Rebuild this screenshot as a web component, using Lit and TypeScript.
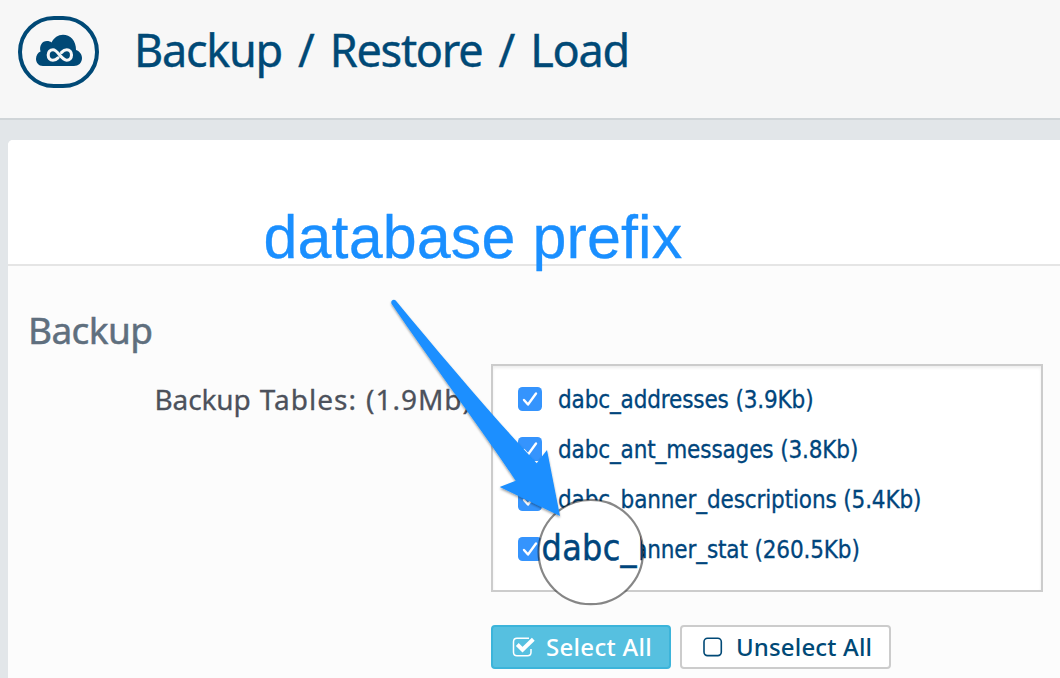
import { LitElement, html, css, svg } from "lit";
import { customElement, state } from "lit/decorators.js";

interface TableRow {
  name: string;
  size: string;
}

@customElement("app-root")
export class AppRoot extends LitElement {
  @state() private rows: TableRow[] = [
    { name: "dabc_addresses", size: "3.9Kb" },
    { name: "dabc_ant_messages", size: "3.8Kb" },
    { name: "dabc_banner_descriptions", size: "5.4Kb" },
    { name: "dabc_banner_stat", size: "260.5Kb" },
  ];

  static styles = css`
    :host { display: block; position: relative; width: 1060px; height: 678px; overflow: hidden;
      background: #e2e6e9; font-family: "Noto Sans", sans-serif; color: #004976; }
    * { box-sizing: border-box; }
    header { display: flex; align-items: flex-start; height: 120px; padding: 16px 0 0 18px;
      background: #f7f7f7; border-bottom: 2px solid #d0d5d8; }
    .logo { width: 81px; height: 72px; flex: none; }
    h1 { margin: 3px 0 0 35px; font-size: 45px; line-height: 62px; font-weight: 400; white-space: pre;
      letter-spacing: -1.3px; word-spacing: 5.9px; -webkit-text-stroke: 0.4px currentColor; }
    .panel { margin: 20px 0 0 8px; height: 538px; background: #fcfcfc; border-radius: 5px 0 0 0; overflow: hidden; }
    .strip { height: 126px; background: #fff; border-bottom: 2px solid #e5e5e5; }
    h2 { margin: 0; padding: 39px 0 0 20px; font-size: 37px; line-height: 50px; height: 98px; font-weight: 400;
      letter-spacing: -0.6px; color: #5f6f7e; -webkit-text-stroke: 0.5px currentColor; }
    .form { display: grid; grid-template-columns: 483px 552px; }
    .label { padding: 15px 19px 0 0; text-align: right; font-size: 28px; line-height: 40px; color: #4c515b;
      white-space: nowrap; letter-spacing: 1px; word-spacing: 0.8px; -webkit-text-stroke: 0.3px currentColor; }
    .label span { letter-spacing: -0.1px; }
    .list { height: 228px; padding: 8px 0 0 25px; background: #fff; border: 2px solid #ccc; box-shadow: inset 0 2px 3px rgba(0,0,0,.07); }
    .row { display: flex; align-items: center; height: 50px; gap: 16px; color: #00457c; }
    .box { width: 24px; height: 24px; flex: none; display: block; }
    .row span { padding-top: 2px; font: 24px/30px "DejaVu Sans Condensed", "DejaVu Sans", sans-serif; font-stretch: condensed;
      white-space: nowrap; letter-spacing: -0.14px; -webkit-text-stroke: 0.3px currentColor; }
    .buttons { grid-column: 2; display: flex; gap: 9px; padding-top: 33px; }
    .btn { display: flex; align-items: center; height: 44px; border-radius: 4px; border: 2px solid #ccc; background: #fff; font-size: 24px; line-height: 40px; font-weight: 500; white-space: nowrap; }
    .primary { width: 180px; padding-left: 18px; gap: 9px; background: #56c0e0; border-color: #3cb4da; color: #fff; letter-spacing: 0.3px; }
    .plain { width: 211px; padding-left: 18px; gap: 10px; letter-spacing: 0.15px; }
    .btn svg { width: 26px; height: 24px; flex: none; }
    .notes { position: absolute; inset: 0; width: 1060px; height: 678px; pointer-events: none; }
    .caption { font: 61px "Liberation Sans", sans-serif; letter-spacing: 0.12px; fill: #1a8fff; stroke: #1a8fff; stroke-width: 0.3px; }
    .lens { font: 35.5px "DejaVu Sans Condensed", "DejaVu Sans", sans-serif; font-stretch: condensed; letter-spacing: 0.35px; fill: #00457c; stroke: #00457c; stroke-width: 0.5px; }
  `;

  private check() {
    return html`<svg class="box" viewBox="0 0 24 24">
      <rect width="24" height="24" rx="4.5" fill="#3594fd"/>
      <path d="M6 13 L10 17.5 L18 6.5" fill="none" stroke="#fff" stroke-width="2.4" stroke-linecap="round" stroke-linejoin="round"/>
    </svg>`;
  }

  render() {
    return html`
      <header>
        <svg class="logo" viewBox="0 0 81 72">
          <rect x="2" y="2" width="77" height="68" rx="34" fill="none" stroke="#004976" stroke-width="4"/>
          <path fill="#004976" d="M25 50 C20.5 50 18 46.5 18 43 C18 39.5 20 36.5 22.5 35.5 C21 30 24 25 29 25 C31 25 32.5 25.5 33.5 26.5 C36 21.5 40 18.7 45 18.7 C52 18.7 58.3 24.5 58 34 C61.8 35.2 64 38.5 64 42 C64 47 60.3 50 56 50 Z"/>
          <path fill="none" stroke="#f7f7f7" stroke-width="3.1" stroke-linecap="round" d="M40 41.8 C38.2 43.6 36.6 44.2 34.9 44.2 C32 44.2 30.2 41.8 30.2 39 C30.2 36 32 33.8 35 33.8 C40 33.8 43.2 44.2 48.7 44.2 C51.7 44.2 53.5 41.8 53.5 39 C53.5 36 51.6 33.8 48.8 33.8 C46.8 33.8 45.3 34.6 43.6 36.4"/>
        </svg>
        <h1>Backup / Restore / Load</h1>
      </header>
      <section class="panel">
        <div class="strip"></div>
        <h2>Backup</h2>
        <div class="form">
          <div class="label"><span>Backup</span> Tables: (1.9Mb)</div>
          <div class="list">
            ${this.rows.map((r) => html`<label class="row">${this.check()}<span>${r.name} (${r.size})</span></label>`)}
          </div>
          <div class="buttons">
            <div class="btn primary">
              <svg viewBox="0 0 26 24" fill="none" stroke="#fff"><path d="M18 3.3 H6 Q2.5 3.3 2.5 6.8 V17.3 Q2.5 20.8 6 20.8 H16.5 Q20 20.8 20 17.3 V14" stroke-width="1.5"/><path d="M6.3 9.5 L11.5 14.6 L22.3 4.2" stroke-width="4"/></svg>
              <span>Select All</span>
            </div>
            <div class="btn plain">
              <svg viewBox="0 0 26 24"><rect x="4" y="3.3" width="17.3" height="17.3" rx="3.5" fill="none" stroke="#004976" stroke-width="1.6"/></svg>
              <span>Unselect All</span>
            </div>
          </div>
        </div>
      </section>
      <svg class="notes" viewBox="0 0 1060 678">
        ${svg`
        <defs>
          <clipPath id="lensClip"><circle cx="590.8" cy="552" r="52"/></clipPath>
          <filter id="sh" x="-10%" y="-10%" width="120%" height="120%"><feDropShadow dx="0" dy="1.5" stdDeviation="1.2" flood-color="#000" flood-opacity=".4"/></filter>
        </defs>
        <text class="caption" x="263.5" y="258">database <tspan x="532.5">prefix</tspan></text>
        <circle cx="590.8" cy="552" r="52" fill="#fff"/>
        <g clip-path="url(#lensClip)"><text class="lens" x="541.5" y="560.3">dabc_<tspan dx="0.8">b</tspan></text></g>
        <circle cx="590.8" cy="552" r="52.2" fill="none" stroke="#000" stroke-opacity=".47" stroke-width="2.2"/>
        <path filter="url(#sh)" fill="#1a8fff" d="M395.7 300.5 C393.5 298.5 390 301 391.7 304 C430 361 475 420 515.7 480.7 L499.7 487 L560 516 L547 450 L536.7 463.3 C490 413 440 354 395.7 300.5 Z"/>`}
      </svg>`;
  }
}
